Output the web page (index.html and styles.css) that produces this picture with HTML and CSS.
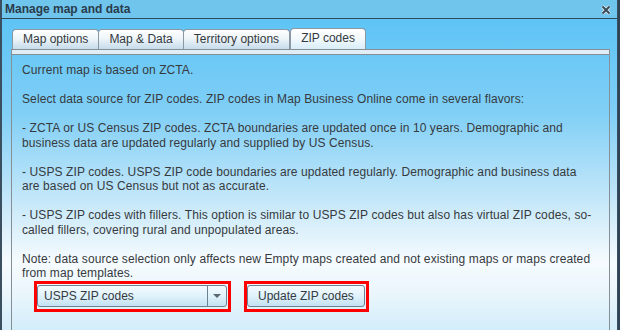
FILE: index.html
```html
<!DOCTYPE html>
<html lang="en">
<head>
    <meta charset="UTF-8">
    <title>Manage map and data</title>
    <link rel="stylesheet" href="styles.css">
</head>
<body>
    <div class="dialog">
        <div class="titlebar">
            <span class="title">Manage map and data</span>
            <svg class="close" width="10" height="10" viewBox="0 0 10 10">
                <path d="M1.5 1.5 L8.5 8.5 M8.5 1.5 L1.5 8.5" stroke="#e6f2f8" stroke-width="3.4"/>
                <path d="M1.5 1.5 L8.5 8.5 M8.5 1.5 L1.5 8.5" stroke="#3b4a57" stroke-width="2"/>
            </svg>
        </div>

        <div class="dialog-body">
            <ul class="tabs">
                <li class="tab">Map options</li>
                <li class="tab">Map &amp; Data</li>
                <li class="tab">Territory options</li>
                <li class="tab active">ZIP codes</li>
            </ul>

            <div class="panel">
                <div class="strip"></div>
                <div class="content">
                    <p>Current map is based on ZCTA.</p>
                    <p>Select data source for ZIP codes. ZIP codes in Map Business Online come in several flavors:</p>
                    <p>- ZCTA or US Census ZIP codes. ZCTA boundaries are updated once in 10 years. Demographic and<br>business data are updated regularly and supplied by US Census.</p>
                    <p>- USPS ZIP codes. USPS ZIP code boundaries are updated regularly. Demographic and business data<br>are based on US Census but not as accurate.</p>
                    <p>- USPS ZIP codes with fillers. This option is similar to USPS ZIP codes but also has virtual ZIP codes, so-<br>called fillers, covering rural and unpopulated areas.</p>
                    <p>Note: data source selection only affects new Empty maps created and not existing maps or maps created<br>from map templates.</p>

                    <div class="controls">
                        <div class="highlight">
                            <div class="select">
                                <span class="select-text">USPS ZIP codes</span>
                                <span class="select-arrow"></span>
                            </div>
                        </div>
                        <div class="highlight">
                            <div class="button">Update ZIP codes</div>
                        </div>
                    </div>
                </div>
            </div>
        </div>
    </div>
</body>
</html>
```

FILE: styles.css
```css
body {
    margin: 0;
    background: #2e4456;
    font-family: "Liberation Sans", Arial, sans-serif;
    font-size: 12px;
    color: #363a3e;
    height: 330px;
    overflow: hidden;
}

.dialog {
    width: 615px;
    height: 330px;
    border-left: 2px solid #3a4f60;
    border-right: 1px solid #3a4f60;
    display: flex;
    flex-direction: column;
}

/* Title bar */
.titlebar {
    height: 18px;
    flex: none;
    display: flex;
    align-items: center;
    justify-content: space-between;
    padding: 0 6px 0 3px;
    background: #6fc5ec;
    border-bottom: 1px solid #33495a;
}

.title {
    font-weight: bold;
    font-size: 12px;
    color: #2a3b4b;
}

.close {
    margin-top: 2px;
}

.dialog-body {
    flex: 1;
    min-height: 0;
    display: flex;
    flex-direction: column;
    padding: 9px 7px 0 9px;
    background: linear-gradient(to bottom, #5ec4f5 0%, #80cff6 30%, #c4e7f9 58%, #f6fbfe 78%, #eaf6fc 88%, #d3edfa 100%);
}

/* Tabs */
.tabs {
    list-style: none;
    margin: 0;
    padding: 0 0 0 1px;
    display: flex;
    align-items: flex-end;
    height: 21px;
    flex: none;
}

.tab {
    height: 19px;
    line-height: 19px;
    padding: 0 10px;
    margin-right: -1px;
    border: 1px solid #8b98a3;
    border-bottom: none;
    border-radius: 4px 4px 0 0;
    background: linear-gradient(to bottom, #ffffff 0%, #eef5f9 45%, #c6dceb 100%);
}

.tab.active {
    height: 20px;
    margin-left: 1px;
    background: linear-gradient(to bottom, #ffffff 0%, #f2f9fd 50%, #d8edf9 100%);
}

/* Panel */
.panel {
    flex: 1;
    min-height: 0;
    border: 1px solid #868f96;
    border-bottom: none;
}

.strip {
    height: 4px;
    background: #e1eef5;
    border-bottom: 1px solid #868f96;
}

.content {
    padding: 8px 10px 0 10px;
    line-height: 14.5px;
}

.content p {
    margin: 0 0 14.5px 0;
    white-space: nowrap;
    letter-spacing: 0.1px;
}

.content p:last-of-type {
    margin-bottom: 0;
}

/* Controls */
.controls {
    display: flex;
    gap: 13px;
    padding: 0 0 0 12px;
}

.highlight {
    border: 3px solid #ff0000;
    padding: 1px 1px 2px 0;
}

.select {
    width: 188px;
    height: 20px;
    display: flex;
    border: 1px solid #6c8293;
    border-radius: 3px;
    background: linear-gradient(to bottom, #f4fbff 0%, #e0f2fb 50%, #c3e2f3 100%);
}

.select-text {
    flex: 1;
    padding-left: 6px;
    line-height: 20px;
}

.select-arrow {
    width: 18px;
    border-left: 1px solid #6c8293;
    position: relative;
}

.select-arrow::after {
    content: "";
    position: absolute;
    left: 5px;
    top: 8px;
    border-left: 4px solid transparent;
    border-right: 4px solid transparent;
    border-top: 4px solid #5b6670;
}

.button {
    height: 20px;
    line-height: 20px;
    padding: 0 10px;
    border: 1px solid #6c8293;
    border-radius: 3px;
    background: linear-gradient(to bottom, #f4fbff 0%, #e0f2fb 50%, #c3e2f3 100%);
}
```
